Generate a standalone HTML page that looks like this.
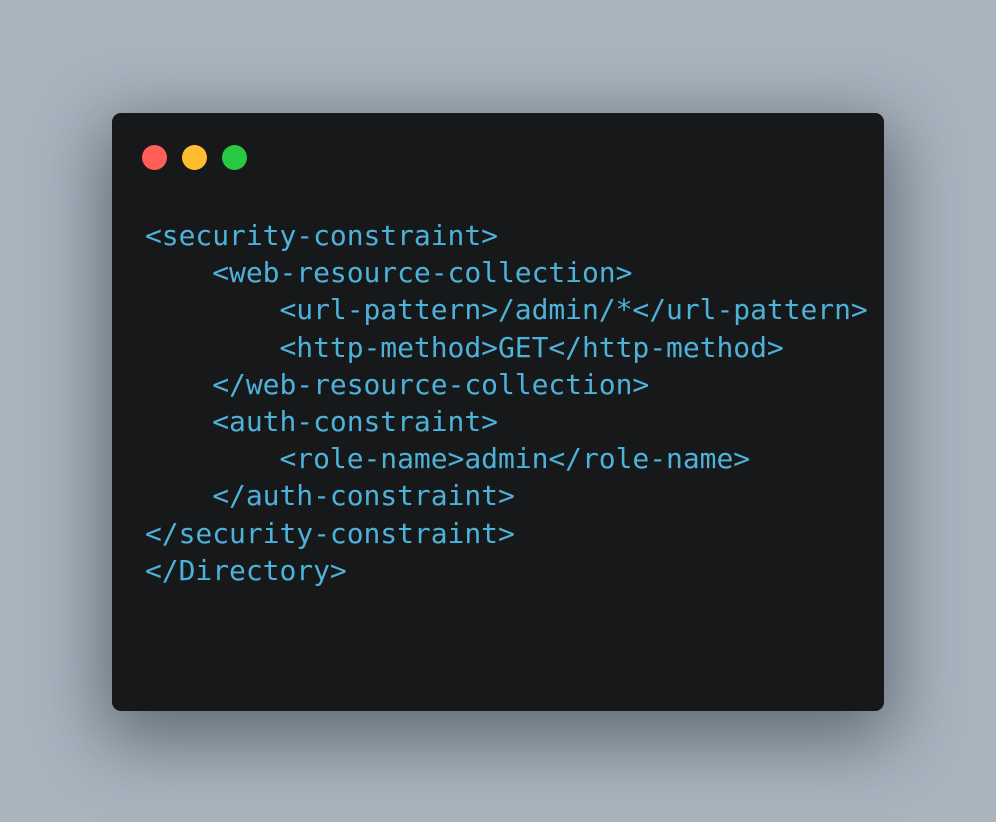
<!DOCTYPE html>
<html><head><style>
html,body{margin:0;padding:0}
body{width:996px;height:822px;background:#a9b4bf;position:relative;overflow:hidden}
.win{position:absolute;left:112px;top:113px;width:772px;height:598px;background:#17181a;border-radius:9px;box-shadow:0 20px 70px 10px rgba(40,48,58,0.55)}
.dot{position:absolute;top:32px;width:25px;height:25px;border-radius:50%}
pre{position:absolute;left:33px;top:104px;margin:0;font-family:"DejaVu Sans Mono","Liberation Mono",monospace;font-size:28px;line-height:37.2px;color:#4db2da;letter-spacing:-0.05px}
</style></head><body>
<div class="win">
<div class="dot" style="left:30px;background:#ff5f57"></div>
<div class="dot" style="left:70px;background:#febc2e"></div>
<div class="dot" style="left:110px;background:#28c840"></div>
<pre>&lt;security-constraint&gt;
    &lt;web-resource-collection&gt;
        &lt;url-pattern&gt;/admin/*&lt;/url-pattern&gt;
        &lt;http-method&gt;GET&lt;/http-method&gt;
    &lt;/web-resource-collection&gt;
    &lt;auth-constraint&gt;
        &lt;role-name&gt;admin&lt;/role-name&gt;
    &lt;/auth-constraint&gt;
&lt;/security-constraint&gt;
&lt;/Directory&gt;</pre>
</div>
</body></html>
